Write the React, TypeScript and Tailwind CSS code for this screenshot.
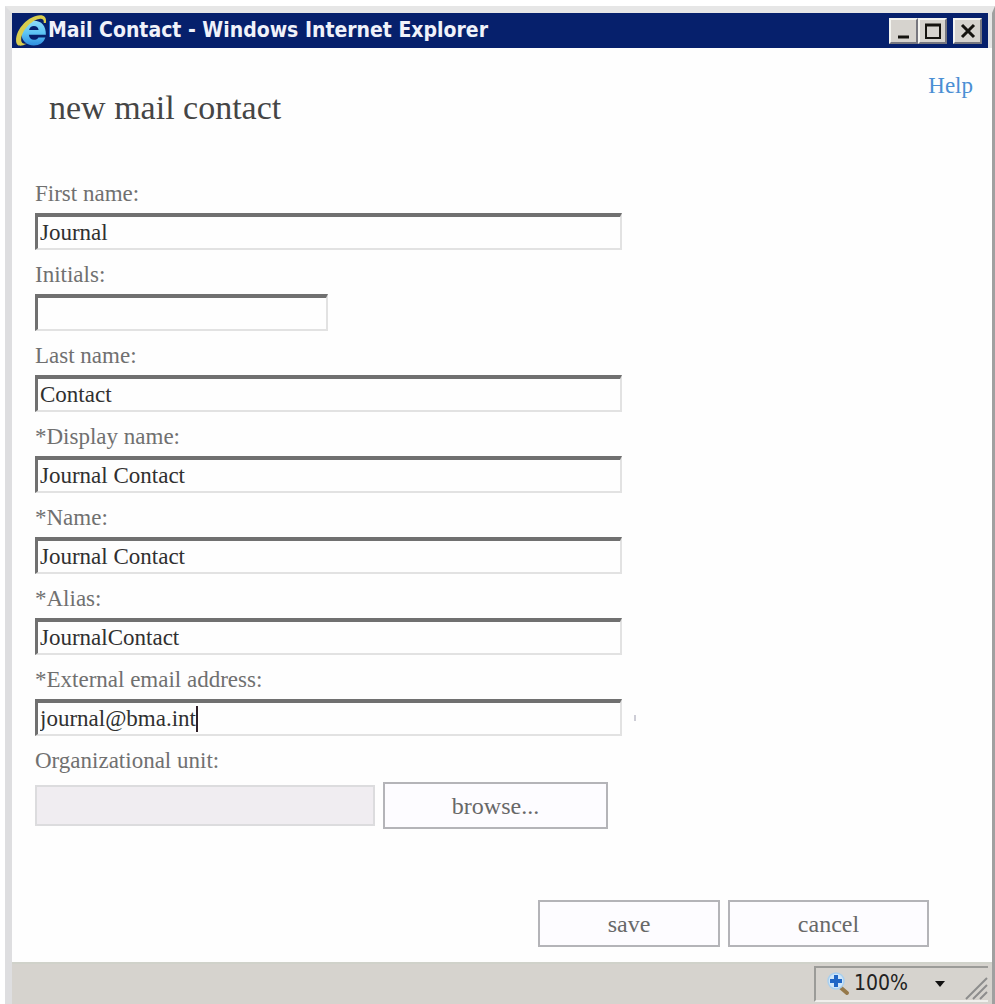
import { useState } from 'react';

interface Field {
  id: string;
  label: string;
  value: string;
  short?: boolean;
  focused?: boolean;
}

const FIELDS: Field[] = [
  { id: 'first-name', label: 'First name:', value: 'Journal' },
  { id: 'initials', label: 'Initials:', value: '', short: true },
  { id: 'last-name', label: 'Last name:', value: 'Contact' },
  { id: 'display-name', label: '*Display name:', value: 'Journal Contact' },
  { id: 'name', label: '*Name:', value: 'Journal Contact' },
  { id: 'alias', label: '*Alias:', value: 'JournalContact' },
  { id: 'email', label: '*External email address:', value: 'journal@bma.int', focused: true },
];

function ExplorerIcon() {
  return (
    <svg className="h-[33px] w-[33px] shrink-0" viewBox="1 0 31 31" fill="none">
      <defs>
        <linearGradient id="e-fill" x1="0" y1="0" x2="0" y2="1">
          <stop offset="0" stopColor="#8fdcf8" />
          <stop offset="0.5" stopColor="#5cc4f4" />
          <stop offset="1" stopColor="#2f8fe0" />
        </linearGradient>
      </defs>
      <path
        fill="url(#e-fill)"
        fillRule="evenodd"
        d="M30 19.500H14C14.400 22.500 16.200 24.200 18.700 24.200C20.800 24.200 22.300 23.300 23 22H29.500C28 27 24 29.500 18.700 29.500C11.700 29.500 7 24.700 7 18C7 11 11.800 6.300 18.700 6.300C26 6.300 30.300 11.200 30 19.500ZM14.200 15H23.200C22.800 12.500 21.200 11.200 18.800 11.200C16.400 11.200 14.800 12.500 14.200 15Z"
      />
      <path
        fill="#d9cd4e"
        d="M30 8.500C31 3.500 28.500 1 24.500 1.100C14 1.500 2 13.500 2 25C2 30.700 6.500 31 12 28C8.700 28.300 6.600 27.200 6.800 23.500C7.300 15.500 16.500 5.500 24 4.600C27 4.300 28.400 5.500 28 8.500Z"
      />
    </svg>
  );
}

function ZoomIcon() {
  return (
    <svg className="h-6 w-6 shrink-0" viewBox="0 0 24 24" fill="none">
      <path d="M14 15l7 6" stroke="#96794a" strokeWidth="4" strokeLinecap="round" />
      <circle cx="10" cy="9" r="8" fill="#cfe6f9" stroke="#a9cfee" strokeWidth="1.500" />
      <path d="M10 3v12M4 9h12" stroke="#1f66c6" strokeWidth="4" />
    </svg>
  );
}

function CaptionButton({ label, path }: { label: string; path: string }) {
  return (
    <button
      type="button"
      aria-label={label}
      className="flex h-[26px] w-[29px] items-center justify-center border-2 border-t-[#f4f4f0] border-l-[#f4f4f0] border-r-[#77777f] border-b-[#77777f] bg-[#d6d3ce]"
    >
      <svg className="h-5 w-5" viewBox="0 0 20 20" fill="none" stroke="#15130f">
        <path d={path} strokeWidth="3" />
        {label === 'Maximize' && <path d="M3 4v13h14V4" strokeWidth="2" />}
      </svg>
    </button>
  );
}

function TextField({ field }: { field: Field }) {
  const [value, setValue] = useState(field.value);

  return (
    <div className="flex flex-col items-start">
      <label htmlFor={field.id} className="pt-3 pb-1.5 text-[23px] leading-[26px] text-[#707070]">
        {field.label}
      </label>
      <div className="flex w-full items-center gap-3">
        <div
          className={`flex h-[37px] items-center border-t-4 border-l-[3px] border-r-2 border-b-2 border-t-[#707070] border-l-[#707070] border-r-[#e2e2e2] border-b-[#e2e2e2] pl-0.5 ${
            field.short ? 'w-[293px]' : 'w-[587px] max-w-full'
          }`}
        >
          <input
            id={field.id}
            type="text"
            value={value}
            onChange={(e) => setValue(e.target.value)}
            className={`field-sizing-content min-w-px text-[23px] leading-[28px] text-[#303030] outline-none ${
              field.focused ? '' : 'flex-1'
            }`}
          />
          {field.focused && <span className="h-[26px] w-0.5 bg-[#302028]" />}
        </div>
        {field.focused && <span className="h-1.5 w-0.5 bg-[#cdcdd6]" />}
      </div>
    </div>
  );
}

const ACTION_BUTTON =
  'h-[47px] border-2 border-[#b4b4b8] bg-[#fdfcff] text-2xl leading-7 text-[#686868]';

export default function App() {
  return (
    <div className="min-h-screen bg-white pt-[6px] pl-[5px] font-['Liberation_Serif',serif]">
      <div className="flex min-h-[998px] flex-col border-t-[7px] border-l-[7px] border-r-[3px] border-t-[#e6e6e6] border-l-[#dedee0] border-r-[#a0a0a0] bg-[#fefefe]">
        <div className="flex border-r-4 border-[#e6e6e6]">
          <header className="flex h-[35px] flex-1 items-center bg-[#06206c] pl-[3px]">
            <ExplorerIcon />
            <h1 className="flex-1 font-['DejaVu_Sans_Condensed','DejaVu_Sans',sans-serif] text-[21px] font-bold whitespace-nowrap text-[#f0f2fa]">
              Mail Contact - Windows Internet Explorer
            </h1>
            <div className="flex pr-1.5">
              <CaptionButton label="Minimize" path="M4 16h11" />
              <CaptionButton label="Maximize" path="M2 4h16" />
              <span className="w-1.5" />
              <CaptionButton label="Close" path="M4 4l12 12M16 4l-12 12" />
            </div>
          </header>
        </div>

        <main className="flex flex-1 flex-col px-[23px]">
          <div className="flex items-start justify-between pl-[14px]">
            <h2 className="pt-10 text-[34px] leading-10 text-[#454545]">new mail contact</h2>
            <a href="#help" className="-mr-1 pt-6 text-[23px] leading-[28px] text-[#4a8fd4]">
              Help
            </a>
          </div>

          <form className="flex flex-1 flex-col pt-[41px]" onSubmit={(e) => e.preventDefault()}>
            {FIELDS.map((field) => (
              <TextField key={field.id} field={field} />
            ))}
            <label htmlFor="org-unit" className="pt-3 pb-2 text-[23px] leading-[26px] text-[#707070]">
              Organizational unit:
            </label>
            <div className="flex items-center gap-2">
              <input
                id="org-unit"
                type="text"
                disabled
                className="h-[41px] w-[340px] border-2 border-[#dcdcde] bg-[#f0edf1]"
              />
              <button type="button" className={`${ACTION_BUTTON} w-[225px]`}>
                browse...
              </button>
            </div>
            <div className="mt-auto flex justify-end gap-2 pr-10 pb-[15px]">
              <button type="submit" className={`${ACTION_BUTTON} w-[182px]`}>
                save
              </button>
              <button type="button" className={`${ACTION_BUTTON} w-[201px]`}>
                cancel
              </button>
            </div>
          </form>
        </main>

        <footer className="flex h-[42px] justify-end border-t-2 border-[#d0d2ca] bg-[#d6d3ce] pt-0.5 pr-1">
          <div className="flex h-9 w-[174px] items-center border-t-2 border-b-2 border-l-2 border-t-[#9b9b98] border-l-[#9b9b98] border-b-[#f0efec] pl-2.5 font-['DejaVu_Sans_Condensed','DejaVu_Sans',sans-serif] text-[21px] text-[#222]">
            <ZoomIcon />
            <span className="pl-1">100%</span>
            <button type="button" aria-label="Change zoom level" className="ml-[22px] p-1">
              <svg className="h-2 w-3" viewBox="0 0 12 8">
                <path d="M1 1h10L6 7z" fill="#111" />
              </svg>
            </button>
            <svg className="ml-auto h-6 w-6 self-end" viewBox="0 0 24 24" stroke="#8d8d8d" strokeWidth="2">
              <path d="M2 23L23 2M9 23L23 9M16 23l7-7" />
            </svg>
          </div>
        </footer>
      </div>
    </div>
  );
}
